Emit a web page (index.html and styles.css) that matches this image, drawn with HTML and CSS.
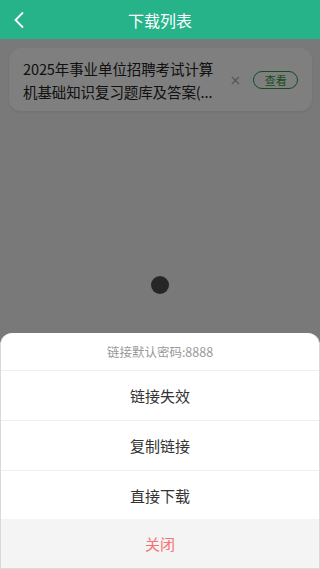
FILE: index.html
```html
<!DOCTYPE html>
<html lang="zh">
<head>
<meta charset="utf-8">
<link rel="stylesheet" href="styles.css">
</head>
<body>
<div class="app">
  <header class="header">
    <svg class="back" width="12" height="18" viewBox="0 0 12 18"><path d="M10 1.5 L2.5 9 L10 16.5" fill="none" stroke="#fff" stroke-width="1.8"/></svg>
    <div class="title">下载列表</div>
  </header>
  <main class="content">
    <div class="card">
      <div class="card-text">2025年事业单位招聘考试计算机基础知识复习题库及答案(...</div>
      <span class="close-x">×</span>
      <span class="view-btn">查看</span>
    </div>
    <div class="mask"></div>
    <div class="dot"></div>
  </main>
  <div class="sheet">
    <div class="sheet-tip">链接默认密码:8888</div>
    <div class="sheet-item">链接失效</div>
    <div class="sheet-item">复制链接</div>
    <div class="sheet-item last">直接下载</div>
    <div class="sheet-cancel">关闭</div>
  </div>
</div>
</body>
</html>
```
FILE: styles.css
```css
* { box-sizing: border-box; }
html, body { margin: 0; padding: 0; }
body {
  font-family: "Noto Sans CJK SC", "Noto Sans", sans-serif;
  width: 320px;
  height: 569px;
  overflow: hidden;
  background: #f2f2f2;
}
.app {
  position: relative;
  width: 320px;
  height: 569px;
  display: flex;
  flex-direction: column;
}
.header {
  height: 39px;
  background: #26b38a;
  display: flex;
  align-items: center;
  justify-content: center;
  position: relative;
  flex: none;
}
.back {
  position: absolute;
  left: 13px;
  top: 11px;
}
.title {
  color: #fff;
  font-size: 16px;
  line-height: 20px;
}
.content {
  position: relative;
  flex: 1;
  padding: 9px 8px 0 9px;
}
.card {
  background: #fff;
  border-radius: 12px;
  height: 63px;
  display: flex;
  align-items: center;
  padding: 0 14px 0 14px;
  box-shadow: 0 1px 3px rgba(0,0,0,0.08);
}
.card-text {
  width: 196px;
  font-size: 14.5px;
  line-height: 23px;
  color: #222;
  letter-spacing: -0.1px;
}
.close-x {
  margin-left: 12px;
  color: #aaa;
  font-size: 14px;
  line-height: 14px;
  font-family: "DejaVu Sans", sans-serif;
}
.view-btn {
  margin-left: 12px;
  width: 45px;
  height: 18px;
  border: 1px solid #2f9a3a;
  border-radius: 9px;
  color: #2f9a3a;
  font-size: 11px;
  line-height: 16px;
  text-align: center;
}
.mask {
  position: absolute;
  inset: 0;
  background: rgba(0,0,0,0.5);
}
.dot {
  position: absolute;
  left: 151px;
  top: 237px;
  width: 18px;
  height: 18px;
  border-radius: 50%;
  background: #262626;
}
.sheet {
  position: absolute;
  left: 0;
  right: 0;
  bottom: 0;
  background: #fff;
  border-radius: 12px 12px 0 0;
  border: 1px solid #d8d8d8;
  border-top: none;
  overflow: hidden;
}
.sheet-tip {
  height: 38px;
  display: flex;
  align-items: center;
  justify-content: center;
  font-size: 12.5px;
  color: #999;
  border-bottom: 1px solid #efefef;
}
.sheet-item {
  height: 50px;
  display: flex;
  align-items: center;
  justify-content: center;
  font-size: 15px;
  color: #333;
  border-bottom: 1px solid #efefef;
}
.sheet-item.last { border-bottom: none; height: 48px; }
.sheet-cancel {
  height: 49px;
  background: #f4f4f4;
  display: flex;
  align-items: center;
  justify-content: center;
  font-size: 15px;
  color: #f57272;
}
```
